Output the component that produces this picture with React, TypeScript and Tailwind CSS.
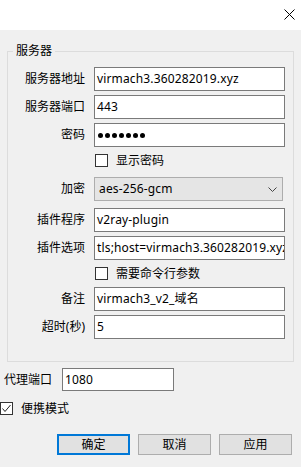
import { FC, ReactNode } from "react"

const CloseIcon = () => (
  <svg width="11" height="11" viewBox="0 0 11 11" fill="none" stroke="#000" strokeWidth="1">
    <path d="M0.5 0.5 L10.5 10.5 M10.5 0.5 L0.5 10.5" />
  </svg>
)

const Chevron = () => (
  <svg width="9" height="5" viewBox="0 0 9 5" fill="none" stroke="#444" strokeWidth="1">
    <path d="M0.5 0.5 L4.5 4.5 L8.5 0.5" />
  </svg>
)

const CheckMark = () => (
  <svg width="11" height="11" viewBox="0 0 11 11" fill="none" stroke="#222" strokeWidth="1">
    <path d="M1.5 5.5 L4 8.5 L9.5 2" />
  </svg>
)

const TextBox: FC<{ value?: ReactNode; className?: string }> = ({ value, className }) => (
  <div
    className={`h-[24px] bg-white border border-[#7a7a7a] pl-[2px] flex items-center overflow-hidden whitespace-nowrap tracking-[0.15px] ${className ?? ""}`}
  >
    {value}
  </div>
)

const Row: FC<{ label: string; className?: string; children: ReactNode }> = ({
  label,
  className,
  children,
}) => (
  <div className={`flex items-center ${className ?? ""}`}>
    <div className="w-[77px] text-right">{label}</div>
    <div className="ml-[9px]">{children}</div>
  </div>
)

const CheckBox: FC<{ label: string; checked?: boolean; className?: string }> = ({
  label,
  checked,
  className,
}) => (
  <div className={`h-[13px] flex items-center gap-[8px] ${className ?? ""}`}>
    <div className="w-[13px] h-[13px] shrink-0 border border-[#333] bg-white flex items-center justify-center">
      {checked && <CheckMark />}
    </div>
    <span className="whitespace-nowrap">{label}</span>
  </div>
)

const Button: FC<{ label: string; primary?: boolean }> = ({ label, primary }) => (
  <button
    className={`w-[73px] h-[21px] bg-[#e1e1e1] flex items-center justify-center ${
      primary ? "border-2 border-[#0078d7]" : "border border-[#adadad]"
    }`}
  >
    {label}
  </button>
)

const Dots = () => (
  <div className="flex gap-[2px]">
    {Array.from({ length: 7 }).map((_, i) => (
      <span key={i} className="w-[5px] h-[5px] rounded-full bg-black" />
    ))}
  </div>
)

export default function App() {
  return (
    <div className="w-[301px] h-[467px] bg-[#f0f0f0] text-[12px] leading-[16px] text-black font-['Noto_Sans','Noto_Sans_CJK_SC',sans-serif] overflow-hidden">
      <div className="h-[30px] bg-white flex items-start justify-end pt-[9px] pr-[6px]">
        <CloseIcon />
      </div>

      <fieldset className="mt-[13px] mx-[7px] border border-[#dcdcdc] pt-[8px] pb-[22px] flex flex-col">
        <legend className="ml-[5px] px-[3px]">服务器</legend>
        <Row label="服务器地址">
          <TextBox className="w-[191px]" value="virmach3.360282019.xyz" />
        </Row>
        <Row label="服务器端口" className="mt-[4px]">
          <TextBox className="w-[191px]" value="443" />
        </Row>
        <Row label="密码" className="mt-[4px]">
          <TextBox className="w-[191px] pl-[3px]" value={<Dots />} />
        </Row>
        <CheckBox label="显示密码" className="mt-[7px] pl-[87px]" />
        <Row label="加密" className="mt-[10px]">
          <div className="w-[189px] h-[24px] bg-[#e5e5e5] border border-[#adadad] flex items-center justify-between pl-[4px] pr-[5px] tracking-[0.15px]">
            <span>aes-256-gcm</span>
            <Chevron />
          </div>
        </Row>
        <Row label="插件程序" className="mt-[7px]">
          <TextBox className="w-[191px]" value="v2ray-plugin" />
        </Row>
        <Row label="插件选项" className="mt-[4px]">
          <TextBox className="w-[191px]" value="tls;host=virmach3.360282019.xyz" />
        </Row>
        <CheckBox label="需要命令行参数" className="mt-[7px] pl-[87px]" />
        <Row label="备注" className="mt-[7px]">
          <TextBox className="w-[191px]" value="virmach3_v2_域名" />
        </Row>
        <Row label="超时(秒)" className="mt-[4px]">
          <TextBox className="w-[191px]" value="5" />
        </Row>
      </fieldset>

      <div className="mt-[6px] flex items-center pl-[4px]">
        <span className="w-[48px]">代理端口</span>
        <TextBox className="ml-[10px] w-[112px] !h-[23px]" value="1080" />
      </div>

      <CheckBox label="便携模式" checked className="mt-[11px]" />

      <div className="mt-[19px] flex justify-end gap-[8px] pr-[9px]">
        <Button label="确定" primary />
        <Button label="取消" />
        <Button label="应用" />
      </div>
    </div>
  )
}
